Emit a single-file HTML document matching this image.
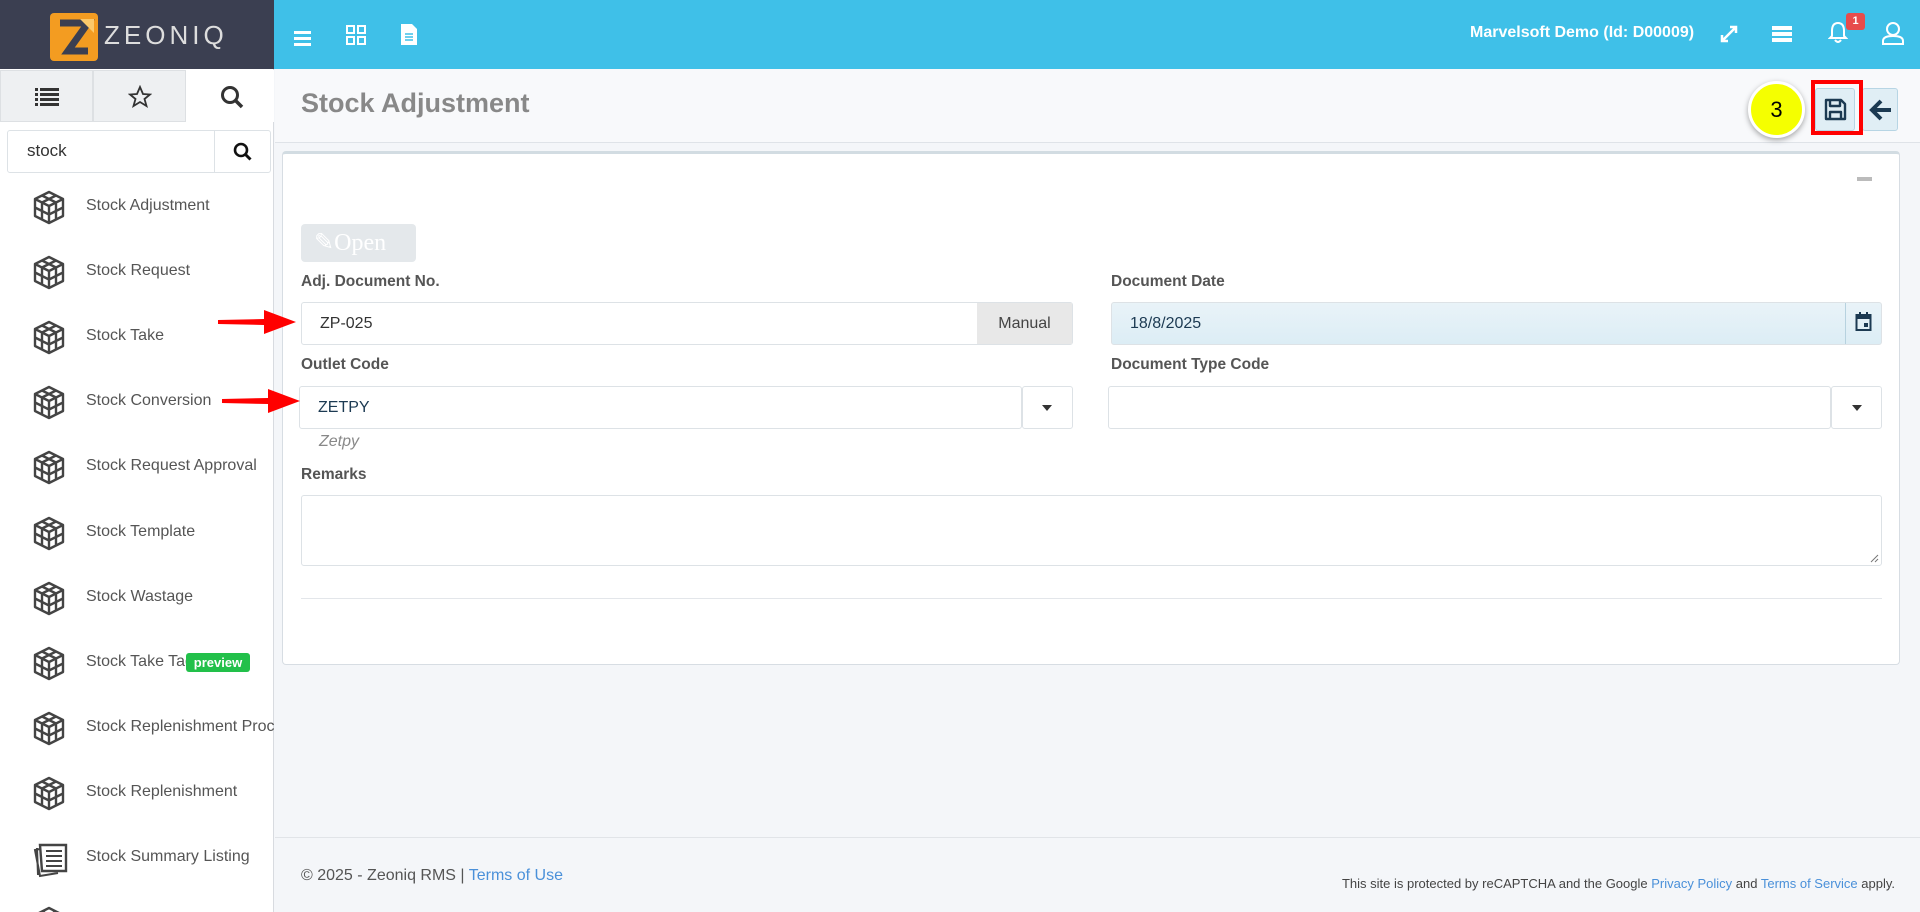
<!DOCTYPE html>
<html style="overflow:hidden;height:912px"><head><meta charset="utf-8"><style>
*{box-sizing:border-box;margin:0;padding:0}
body{width:1920px;height:912px;overflow:hidden;font-family:"Liberation Sans",sans-serif;background:#f4f6f9;position:relative;color:#555}
.abs{position:absolute}
.top{left:0;top:0;width:1920px;height:69px;background:#3fc0e8}
.logo{left:0;top:0;width:274px;height:69px;background:#3b3f51}
.side{left:0;top:69px;width:274px;height:843px;background:#fff;border-right:1px solid #d8dbe0}
.tab{top:70px;height:52px;background:#eef0f2;border:1px solid #dde0e3}
.mi{left:86px;font-size:16px;color:#555}
.ic{left:32px}
.lbl{font-size:15.5px;font-weight:bold;color:#555}
.inp{background:#fff;border:1px solid #dde2e6;border-radius:3px;height:43px;font-size:16px;color:#333;padding:12px 18px}
.caret{width:0;height:0;border-left:5px solid transparent;border-right:5px solid transparent;border-top:6px solid #333}
</style></head><body>
<div class="abs top"></div>
<div class="abs logo"></div>
<svg class="abs" style="left:50px;top:13px" width="48" height="48" viewBox="0 0 48 48"><rect width="48" height="48" rx="4" fill="#f39c21"/><path d="M10 10 H38 L18 38 H38" stroke="#3b3f51" stroke-width="7" fill="none"/><path d="M30 6 L44 6 L44 20Z" fill="#fcc96a"/></svg>
<div class="abs" style="left:104px;top:20px;font-size:26px;color:#ddd;letter-spacing:4px">ZEONIQ</div>
<div class="abs" style="left:294px;top:31px;width:17px;height:3px;background:#fff;box-shadow:0 6px #fff,0 12px #fff"></div>
<svg class="abs" style="left:346px;top:25px" width="20" height="20"><g fill="none" stroke="#fff" stroke-width="2"><rect x="1" y="1" width="7" height="7"/><rect x="12" y="1" width="7" height="7"/><rect x="1" y="12" width="7" height="7"/><rect x="12" y="12" width="7" height="7"/></g></svg>
<svg class="abs" style="left:401px;top:24px" width="16" height="21"><path d="M0 0H11L16 5V21H0Z" fill="#fff"/><path d="M4 10H12M4 13H12M4 16H12" stroke="#3fc0e8" stroke-width="1.5"/></svg>
<div class="abs" style="left:1470px;top:24px;font-size:16px;color:#fff;font-weight:bold">Marvelsoft Demo (Id: D00009)</div>
<svg class="abs" style="left:1720px;top:25px" width="18" height="18"><path d="M2 16L16 2M10 2H16V8M2 10V16H8" stroke="#fff" stroke-width="2.5" fill="none"/></svg>
<svg class="abs" style="left:1772px;top:26px" width="20" height="17"><rect y="0" width="20" height="4" fill="#fff"/><rect y="6" width="20" height="4" fill="#fff"/><rect y="12" width="20" height="4" fill="#fff"/></svg>
<svg class="abs" style="left:1828px;top:21px" width="20" height="22"><path d="M10 2C5 2 4 6 4 10V15L2 17H18L16 15V10C16 6 15 2 10 2ZM7 19Q10 23 13 19" stroke="#fff" stroke-width="2" fill="none"/></svg>
<div class="abs" style="left:1846px;top:13px;width:19px;height:17px;background:#e74c4c;border-radius:3px;color:#fff;font-size:11px;font-weight:bold;text-align:center;line-height:17px">1</div>
<svg class="abs" style="left:1882px;top:21px" width="22" height="24"><circle cx="11" cy="8" r="6" stroke="#fff" stroke-width="2" fill="none"/><path d="M1 23V20C1 16 5 15 11 15S21 16 21 20V23Z" stroke="#fff" stroke-width="2" fill="none"/></svg>

<div class="abs side"></div>
<div class="abs tab" style="left:0;width:93px"></div>
<div class="abs tab" style="left:93px;width:93px"></div>
<div class="abs" style="left:186px;top:70px;width:88px;height:52px;background:#fff"></div>
<svg class="abs" style="left:35px;top:88px" width="24" height="18"><g fill="#333"><rect x="0" y="0" width="3" height="3"/><rect x="5" y="0" width="19" height="3"/><rect x="0" y="5" width="3" height="3"/><rect x="5" y="5" width="19" height="3"/><rect x="0" y="10" width="3" height="3"/><rect x="5" y="10" width="19" height="3"/><rect x="0" y="15" width="3" height="3"/><rect x="5" y="15" width="19" height="3"/></g></svg>
<svg class="abs" style="left:128px;top:85px" width="24" height="23"><path d="M12 2L15 9L22 9.5L16.5 14L18.5 21L12 17L5.5 21L7.5 14L2 9.5L9 9Z" stroke="#333" stroke-width="1.8" fill="none"/></svg>
<svg class="abs" style="left:220px;top:85px" width="24" height="24"><circle cx="10" cy="10" r="7.5" stroke="#333" stroke-width="3" fill="none"/><path d="M15.5 15.5L22 22" stroke="#333" stroke-width="3.5"/></svg>
<div class="abs" style="left:7px;top:130px;width:264px;height:43px;border:1px solid #dde2e6;border-radius:3px;background:#fff"></div>
<div class="abs" style="left:214px;top:131px;width:1px;height:41px;background:#dde2e6"></div>
<div class="abs" style="left:27px;top:141px;font-size:17px;color:#333">stock</div>
<svg class="abs" style="left:233px;top:142px" width="19" height="19"><circle cx="8" cy="8" r="6" stroke="#111" stroke-width="2.6" fill="none"/><path d="M12.5 12.5L17.5 17.5" stroke="#111" stroke-width="3"/></svg>

<svg width="0" height="0" style="position:absolute"><defs><g id="cube"><path d="M17 2L31 9V26L17 33L3 26V9Z M3 9L17 16L31 9 M17 16V33 M10 5.5L24 12.5V29.5 M24 5.5L10 12.5V29.5 M3 17.5L17 24.5L31 17.5" stroke="#444" stroke-width="2.4" fill="none" stroke-linejoin="round"/></g></defs></svg>
<svg class="abs ic" style="top:190px" width="34" height="35"><use href="#cube"/></svg><div class="abs mi" style="top:197px">Stock Adjustment</div>
<svg class="abs ic" style="top:255px" width="34" height="35"><use href="#cube"/></svg><div class="abs mi" style="top:262px">Stock Request</div>
<svg class="abs ic" style="top:320px" width="34" height="35"><use href="#cube"/></svg><div class="abs mi" style="top:327px">Stock Take</div>
<svg class="abs ic" style="top:385px" width="34" height="35"><use href="#cube"/></svg><div class="abs mi" style="top:392px">Stock Conversion</div>
<svg class="abs ic" style="top:450px" width="34" height="35"><use href="#cube"/></svg><div class="abs mi" style="top:457px">Stock Request Approval</div>
<svg class="abs ic" style="top:516px" width="34" height="35"><use href="#cube"/></svg><div class="abs mi" style="top:523px">Stock Template</div>
<svg class="abs ic" style="top:581px" width="34" height="35"><use href="#cube"/></svg><div class="abs mi" style="top:588px">Stock Wastage</div>
<svg class="abs ic" style="top:646px" width="34" height="35"><use href="#cube"/></svg><div class="abs mi" style="top:653px">Stock Take Tag</div>
<div class="abs" style="left:186px;top:653px;width:64px;height:19px;background:#22c04a;border-radius:3px;color:#fff;font-size:13px;font-weight:bold;text-align:center;line-height:19px">preview</div>
<svg class="abs ic" style="top:711px" width="34" height="35"><use href="#cube"/></svg><div class="abs mi" style="top:718px;width:188px;overflow:hidden;white-space:nowrap">Stock Replenishment Process</div>
<svg class="abs ic" style="top:776px" width="34" height="35"><use href="#cube"/></svg><div class="abs mi" style="top:783px">Stock Replenishment</div>
<svg class="abs" style="left:32px;top:841px" width="36" height="38"><path d="M8 4H34V30H10Z" stroke="#444" stroke-width="2.4" fill="#fff"/><path d="M14 10H30M14 15H30M14 20H30M14 25H30" stroke="#444" stroke-width="2"/><path d="M8 8L3 9L8 35L26 32 M5 7L6 34" stroke="#444" stroke-width="2" fill="none"/></svg>
<div class="abs mi" style="top:848px">Stock Summary Listing</div>
<svg class="abs ic" style="top:906px" width="34" height="6"><use href="#cube"/></svg>

<div class="abs" style="left:275px;top:69px;width:1645px;height:74px;background:#f8f9fb;border-bottom:1px solid #dfe3e8"></div>
<div class="abs" style="left:301px;top:88px;font-size:27px;font-weight:bold;color:#888">Stock Adjustment</div>
<div class="abs" style="left:1815px;top:88px;width:40px;height:43px;background:#e0eef5;border:1px solid #b7d5e4;border-radius:3px"></div>
<div class="abs" style="left:1862px;top:88px;width:36px;height:43px;background:#e0eef5;border:1px solid #b7d5e4;border-radius:3px"></div>
<svg class="abs" style="left:1824px;top:98px" width="23" height="23"><path d="M2 2H17L21 6V21H2Z M6 2V8H16V2 M6 21V14H17V21" stroke="#1c3a52" stroke-width="2.4" fill="none" stroke-linejoin="round"/></svg>
<svg class="abs" style="left:1869px;top:99px" width="24" height="22"><path d="M22 11H4M12 2L3 11L12 20" stroke="#1c3a52" stroke-width="4" fill="none"/></svg>
<div class="abs" style="left:1811px;top:80px;width:52px;height:55px;border:4px solid #f00"></div>
<div class="abs" style="left:1748px;top:81px;width:57px;height:57px;border-radius:50%;background:#f5ff00;border:3px solid #fff;box-shadow:0 2px 6px rgba(0,0,0,.35);font-size:22px;color:#000;text-align:center;line-height:51px">3</div>

<div class="abs" style="left:282px;top:151px;width:1618px;height:514px;background:#fff;border:1px solid #d7dde3;border-top:3px solid #d2dce2;border-radius:4px"></div>
<div class="abs" style="left:1857px;top:177px;width:15px;height:4px;background:#bbb"></div>
<div class="abs" style="left:301px;top:224px;width:115px;height:38px;background:#e4e8eb;border-radius:4px;color:#fff;font-family:'Liberation Serif',serif;font-size:24px;padding:4px 0 0 13px">&#9998;Open</div>
<div class="abs lbl" style="left:301px;top:273px">Adj. Document No.</div>
<div class="abs inp" style="left:301px;top:302px;width:772px">ZP-025</div>
<div class="abs" style="left:977px;top:303px;width:95px;height:41px;background:#e8e8e8;font-size:16px;color:#444;text-align:center;line-height:41px">Manual</div>
<div class="abs lbl" style="left:1111px;top:273px">Document Date</div>
<div class="abs inp" style="left:1111px;top:302px;width:771px;background:linear-gradient(#e9f3f8,#dcedf5);color:#1c3a52">18/8/2025</div>
<div class="abs" style="left:1845px;top:303px;width:1px;height:41px;background:#b7d2df"></div>
<svg class="abs" style="left:1855px;top:312px" width="17" height="20"><rect x="1.5" y="3" width="14" height="15" stroke="#1c3a52" stroke-width="2" fill="none"/><rect x="1.5" y="3" width="14" height="4" fill="#1c3a52"/><path d="M5 0V4M12 0V4" stroke="#1c3a52" stroke-width="2"/><rect x="9" y="11" width="4" height="4" fill="#1c3a52"/></svg>
<div class="abs lbl" style="left:301px;top:356px">Outlet Code</div>
<div class="abs inp" style="left:299px;top:386px;width:723px;color:#1c3a52">ZETPY</div>
<div class="abs inp" style="left:1022px;top:386px;width:51px"></div>
<div class="abs caret" style="left:1042px;top:405px"></div>
<div class="abs" style="left:319px;top:433px;font-size:16px;font-style:italic;color:#888">Zetpy</div>
<div class="abs lbl" style="left:1111px;top:356px">Document Type Code</div>
<div class="abs inp" style="left:1108px;top:386px;width:723px"></div>
<div class="abs inp" style="left:1831px;top:386px;width:51px"></div>
<div class="abs caret" style="left:1852px;top:405px"></div>
<div class="abs lbl" style="left:301px;top:466px">Remarks</div>
<div class="abs inp" style="left:301px;top:495px;width:1581px;height:71px"></div>
<svg class="abs" style="left:1870px;top:554px" width="9" height="9"><path d="M1 8L8 1M5 8L8 5" stroke="#777"/></svg>
<div class="abs" style="left:301px;top:598px;width:1581px;height:1px;background:#e3e6ea"></div>

<svg class="abs" style="left:218px;top:308px" width="78" height="28"><path d="M0 12L46 11V2L78 14L46 26V17L0 16Z" fill="#f00"/></svg>
<svg class="abs" style="left:222px;top:387px" width="78" height="28"><path d="M0 12L46 11V2L78 14L46 26V17L0 16Z" fill="#f00"/></svg>

<div class="abs" style="left:275px;top:837px;width:1645px;height:1px;background:#e1e4e8"></div>
<div class="abs" style="left:301px;top:867px;font-size:16px;color:#555">© 2025 - Zeoniq RMS | <span style="color:#4a90d9">Terms of Use</span></div>
<div class="abs" style="right:25px;top:876px;font-size:13px;color:#444">This site is protected by reCAPTCHA and the Google <span style="color:#4a90d9">Privacy Policy</span> and <span style="color:#4a90d9">Terms of Service</span> apply.</div>
</body></html>
